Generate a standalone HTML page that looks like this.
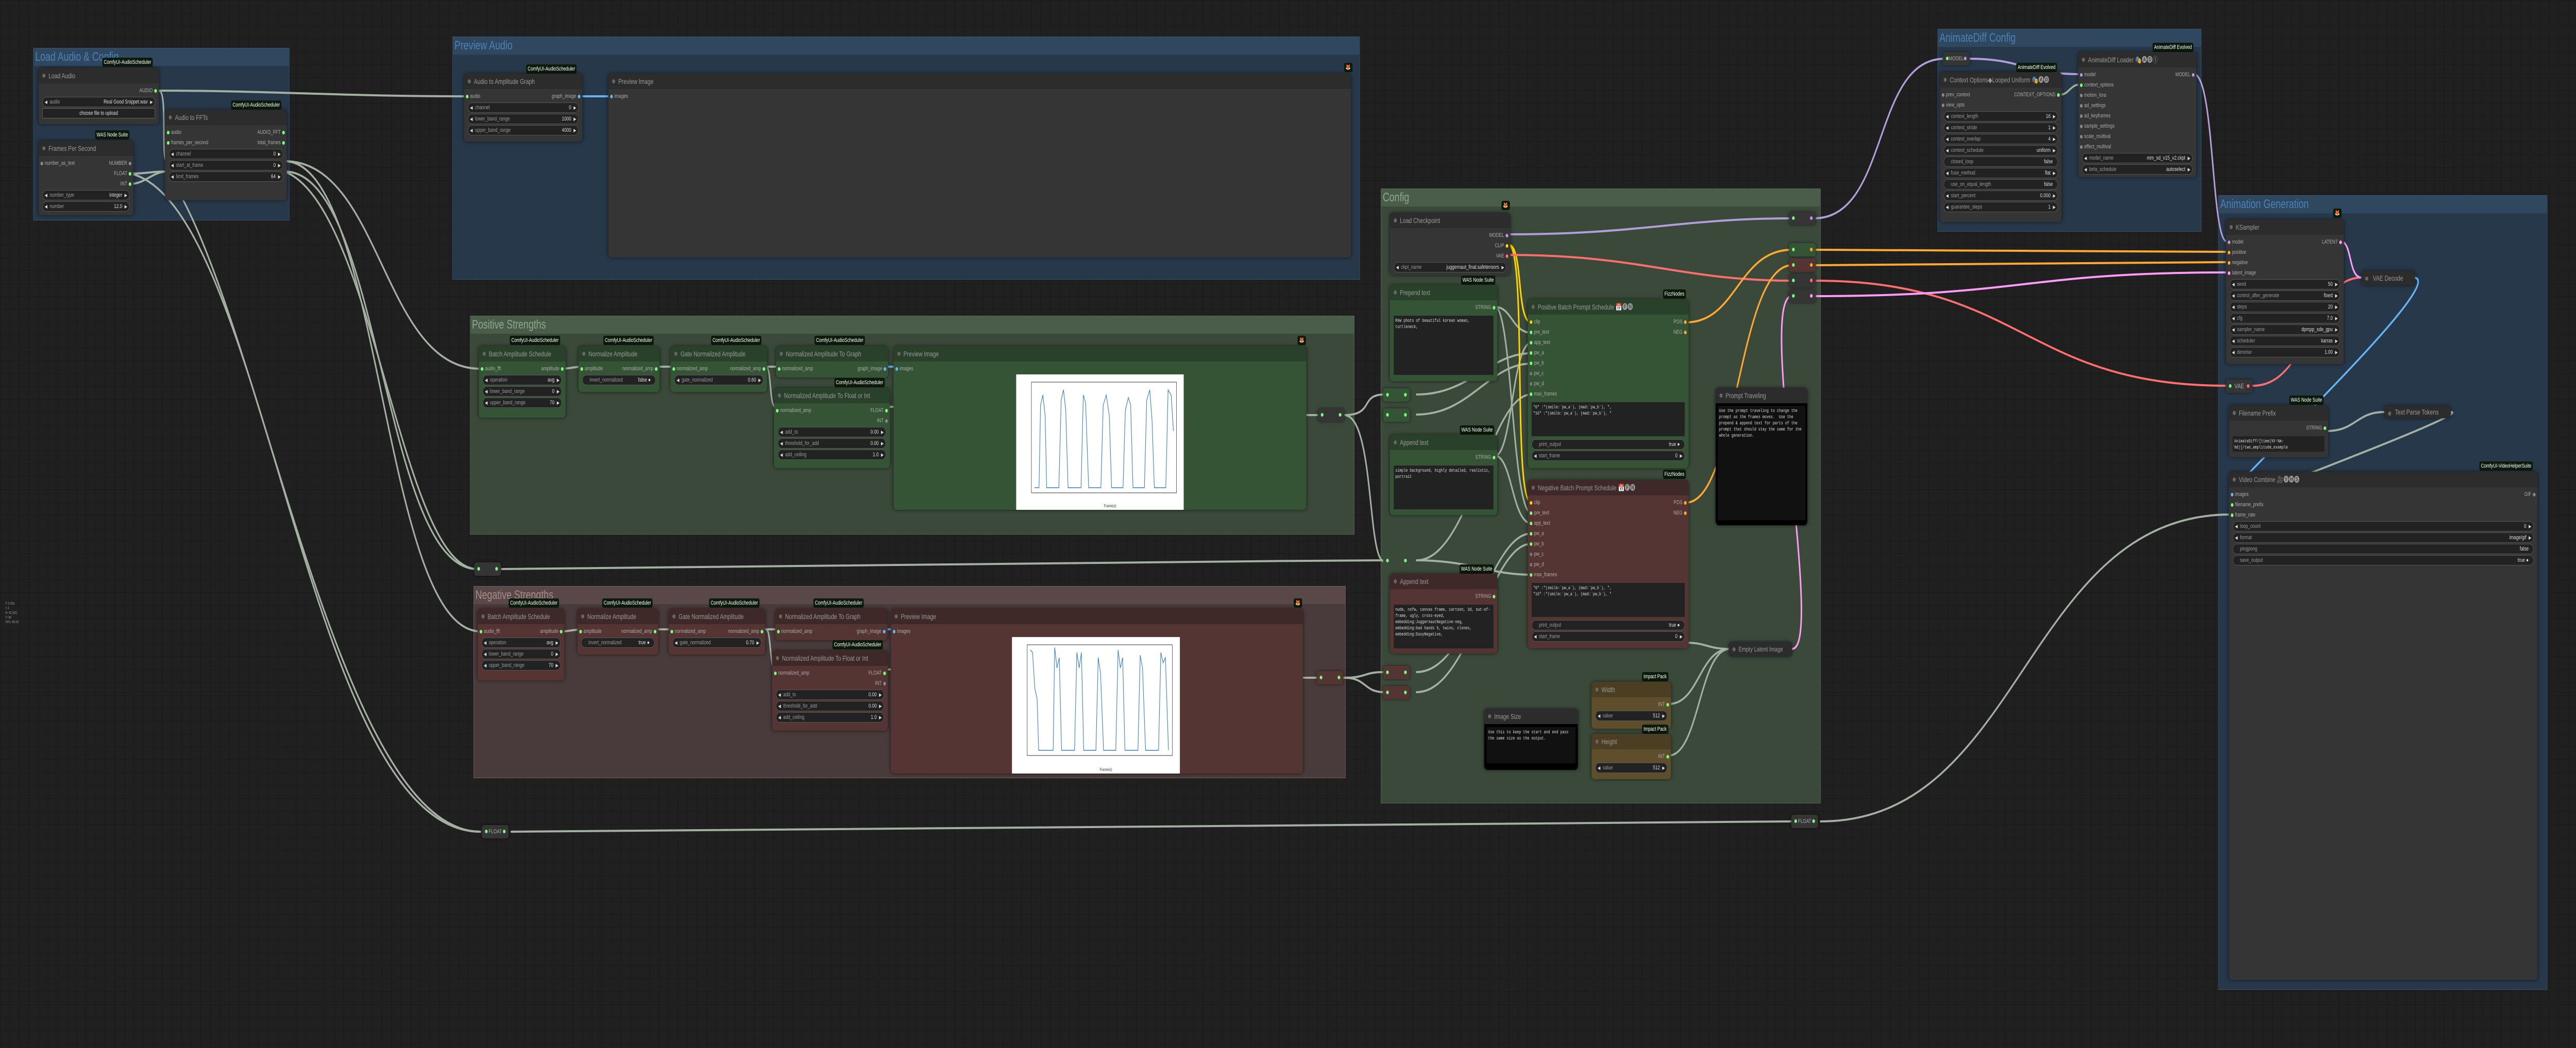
<!DOCTYPE html>
<html><head><meta charset="utf-8"><style>
*{box-sizing:border-box}
html,body{margin:0;padding:0;overflow:hidden;background:#202020}
body{width:100vw;height:100vh;position:relative}
#root{position:absolute;left:0;top:0;width:6746px;height:2035px;overflow:hidden;transform-origin:0 0;background:#202020;background-image:linear-gradient(#1a1a1a 1px,transparent 1px),linear-gradient(90deg,#1a1a1a 1px,transparent 1px);background-size:25px 25px;font-family:"Liberation Sans Narrow","Liberation Sans",sans-serif}
.g{position:absolute;border:1px solid}
.g .h{height:34px;line-height:34px;font-size:24px;padding-left:4px}
.gb{background:#27384a;border-color:#34536f}.gb .h{background:#2f4860;color:#4a82b8}
.gg{background:#3b493b;border-color:#556a55}.gg .h{background:#4a5c4a;color:#8da88d}
.gr{background:#493b3b;border-color:#7a5f5f}.gr .h{background:#5a4848;color:#a88c8c}
.n{position:absolute;background:#353535;border-radius:8px;box-shadow:0 0 8px rgba(0,0,0,.6);color:#aaa;font-size:11px}
.n .t{height:30px;line-height:30px;background:#2c2c2c;border-radius:8px 8px 0 0;padding-left:26px;font-size:14px;color:#999;position:relative;white-space:nowrap;overflow:hidden}
.n .t:before{content:"";position:absolute;left:10px;top:11px;width:8px;height:8px;border-radius:50%;background:#666}
.gn{background:#355435}.gn .t{background:#29402a}
.rn{background:#553434}.rn .t{background:#3e2828}
.bn{background:#000}.bn .t{background:#2c2c2c}
.yn{background:#5e4e2c}.yn .t{background:#4b3e22}
.c{padding-top:4px}
.r{height:20px;line-height:20px;position:relative;padding:0 16px;white-space:nowrap}
.r .o{position:absolute;right:16px}
.d{position:absolute;width:7px;height:7px;border-radius:50%;top:7px;background:#7f7}
.dl{left:5px}.dr{right:5px}
.w{margin:2px 10px;height:20px;line-height:18px;background:#222;border:1px solid #555;border-radius:10px;padding:0 18px;position:relative;color:#999;white-space:nowrap;overflow:hidden}
.w:before{content:"◀";position:absolute;left:5px;font-size:9px;color:#ddd}
.w:after{content:"▶";position:absolute;right:5px;font-size:9px;color:#ddd}
.w b{position:absolute;right:18px;font-weight:normal;color:#ddd}
.w.tg:before,.w.tg:after{content:""}
.w.tg b{right:12px}
.ta{margin:6px 10px;background:#222;color:#ddd;font-family:"Liberation Mono",monospace;font-size:9px;line-height:12px;padding:4px;white-space:pre-wrap}
.bd{position:absolute;background:#0c1a0c;color:#fff;font-size:11px;height:18px;line-height:18px;padding:0 4px;border-radius:4px;white-space:nowrap}
.rr{position:absolute;width:70px;height:26px;background:#353535;border-radius:6px;box-shadow:0 0 6px rgba(0,0,0,.6)}
.rr i{position:absolute;top:9px;width:7px;height:7px;border-radius:50%;background:#7f7}
.rr i.a{left:8px}.rr i.b{right:8px}
svg{position:absolute;left:0;top:0}
</style></head><body><div id="root">

<!-- groups -->
<div class="g gb" style="left:87px;top:93px;width:671px;height:335px"><div class="h">Load Audio &amp; Config</div></div>
<div class="g gb" style="left:1185px;top:71px;width:2376px;height:472px"><div class="h">Preview Audio</div></div>
<div class="g gg" style="left:1231px;top:613px;width:2316px;height:425px"><div class="h">Positive Strengths</div></div>
<div class="g gr" style="left:1240px;top:1138px;width:2284px;height:373px"><div class="h">Negative Strengths</div></div>
<div class="g gg" style="left:3616px;top:366px;width:1152px;height:1194px"><div class="h">Config</div></div>
<div class="g gb" style="left:5074px;top:56px;width:691px;height:394px"><div class="h">AnimateDiff Config</div></div>
<div class="g gb" style="left:5809px;top:379px;width:862px;height:1543px"><div class="h">Animation Generation</div></div>

<!-- wires -->
<svg width="6746" height="2035" fill="none" stroke-linecap="round">
<g stroke="#a3b0a2" stroke-width="4">
<path d="M416 176 C700 176 900 187 1218 187"/>
<path d="M416 176 C440 176 420 313 437 313"/>
<path d="M342 337 C390 337 390 333 437 333"/>
<path d="M342 357 C380 357 400 333 437 333"/>
<path d="M342 337 C700 400 800 1615 1258 1615"/>
<path d="M480 389 C700 700 900 1615 1258 1615"/>
<path d="M745 313 C1000 313 1000 716 1258 716"/>
<path d="M745 313 C1000 313 1000 1226 1258 1226"/>
<path d="M745 333 C1000 333 1000 1105 1250 1105"/>
<path d="M745 333 C980 400 1050 1105 1250 1105"/>
<path d="M1313 1105 C2500 1100 3000 1090 3620 1088"/>
<path d="M1339 1615 C3000 1610 4000 1600 4691 1595"/>
<path d="M4768 1595 C5300 1595 5300 999 5843 999"/>
<path d="M1478 716 L1518 712"/><path d="M1724 712 L1759 712"/><path d="M2006 712 L2035 712"/>
<path d="M2006 712 C2020 712 2015 790 2030 790"/>
<path d="M2327 790 C2900 790 2900 806 3451 806"/>
<path d="M3520 806 C3600 806 3560 766 3625 766"/>
<path d="M3520 806 C3600 806 3580 1090 3625 1090"/>
<path d="M1478 1226 L1518 1222"/><path d="M1724 1222 L1759 1222"/><path d="M2006 1222 L2035 1222"/>
<path d="M2006 1222 C2020 1222 2015 1300 2030 1300"/>
<path d="M2327 1300 C2900 1300 2900 1316 3451 1316"/>
<path d="M3520 1316 C3580 1316 3570 1305 3625 1305"/>
<path d="M3520 1316 C3580 1316 3570 1344 3625 1344"/>
<path d="M3710 766 C3850 766 3900 686 4010 686"/>
<path d="M3710 805 C3850 805 3900 706 4010 706"/>
<path d="M3915 596 C3960 596 3960 646 4010 646"/>
<path d="M3915 596 C3960 596 3960 996 4010 996"/>
<path d="M3915 885 C3960 885 3960 666 4010 666"/>
<path d="M3915 885 C3960 885 3960 1016 4010 1016"/>
<path d="M3710 1088 C3850 1088 3900 766 4010 766"/>
<path d="M3710 1088 C3850 1088 3900 1116 4010 1116"/>
<path d="M3710 1305 C3850 1305 3900 1036 4010 1036"/>
<path d="M3710 1344 C3850 1344 3900 1056 4010 1056"/>
<path d="M4370 1367 C4450 1367 4450 1260 4530 1260"/>
<path d="M4370 1467 C4450 1467 4450 1260 4530 1260"/>
<path d="M4415 1248 C4470 1248 4470 1260 4530 1260"/>
<path d="M5393 184 C5420 184 5420 164 5448 164"/>
<path d="M6092 837 C6170 837 6170 800 6244 800"/>
<path d="M6418 800 C6480 800 5900 960 5843 979"/>
</g>
<g stroke-width="4">
<path stroke="#64b5f6" d="M1512 187 L1600 187"/>
<path stroke="#64b5f6" d="M2320 712 L2343 712"/>
<path stroke="#64b5f6" d="M2320 1222 L2343 1222"/>
<path stroke="#64b5f6" d="M6320 539 C6420 539 5900 900 5843 958"/>
<path stroke="#b39ddb" d="M3950 455 C4300 455 4400 424 4693 424"/>
<path stroke="#b39ddb" d="M4750 424 C4950 424 4900 114 5093 114"/>
<path stroke="#b39ddb" d="M5155 114 C5300 114 5300 144 5448 144"/>
<path stroke="#b39ddb" d="M5745 144 C5800 144 5790 469 5832 469"/>
<path stroke="#ffd500" d="M3950 475 C3990 475 3970 626 4010 626"/>
<path stroke="#ffd500" d="M3950 475 C4000 475 3960 976 4010 976"/>
<path stroke="#ff6e6e" d="M3950 495 C4300 495 4400 545 4693 545"/>
<path stroke="#ff6e6e" d="M4750 545 C5300 545 5300 749 5832 749"/>
<path stroke="#ff6e6e" d="M5900 749 C6050 749 6050 539 6184 539"/>
<path stroke="#ffa931" d="M4415 626 C4550 626 4550 485 4693 485"/>
<path stroke="#ffa931" d="M4415 976 C4550 976 4550 515 4693 515"/>
<path stroke="#ffa931" d="M4750 485 C5300 485 5300 489 5832 489"/>
<path stroke="#ffa931" d="M4750 515 C5300 515 5300 509 5832 509"/>
<path stroke="#ff9cf9" d="M4693 1260 C4780 1260 4600 575 4693 575"/>
<path stroke="#ff9cf9" d="M4750 575 C5300 575 5300 529 5832 529"/>
<path stroke="#ff9cf9" d="M6130 469 C6160 469 6150 539 6184 539"/>
</g>
</svg>

<!-- Load Audio & Config -->
<div class="bd" style="left:268px;top:112px">ComfyUI-AudioScheduler</div>
<div class="n" style="left:101px;top:132px;width:315px;height:109px"><div class="t">Load Audio</div><div class="c">
<div class="r"><span class="o">AUDIO</span><i class="d dr"></i></div>
<div class="w">audio<b>Real Good Snippet.wav</b></div>
<div class="w tg" style="border-radius:0;text-align:center;color:#ddd;border-color:#666">choose file to upload</div></div></div>
<div class="bd" style="left:249px;top:253px">WAS Node Suite</div>
<div class="n" style="left:101px;top:273px;width:248px;height:145px"><div class="t">Frames Per Second</div><div class="c">
<div class="r"><i class="d dl" style="background:#889"></i>number_as_text<span class="o">NUMBER</span><i class="d dr" style="background:#889"></i></div>
<div class="r"><span class="o">FLOAT</span><i class="d dr"></i></div>
<div class="r"><span class="o">INT</span><i class="d dr"></i></div>
<div class="w">number_type<b>integer</b></div><div class="w">number<b>12.0</b></div></div></div>
<div class="bd" style="left:605px;top:195px">ComfyUI-AudioScheduler</div>
<div class="n" style="left:432px;top:213px;width:319px;height:176px"><div class="t">Audio to FFTs</div><div class="c">
<div class="r"><i class="d dl"></i>audio<span class="o">AUDIO_FFT</span><i class="d dr"></i></div>
<div class="r"><i class="d dl"></i>frames_per_second<span class="o">total_frames</span><i class="d dr"></i></div>
<div class="w">channel<b>0</b></div><div class="w">start_at_frame<b>0</b></div><div class="w">limit_frames<b>64</b></div></div></div>

<!-- Preview Audio -->
<div class="bd" style="left:1378px;top:125px">ComfyUI-AudioScheduler</div>
<div class="n" style="left:1215px;top:143px;width:310px;height:132px"><div class="t">Audio to Amplitude Graph</div><div class="c">
<div class="r"><i class="d dl"></i>audio<span class="o">graph_image</span><i class="d dr" style="background:#64b5f6"></i></div>
<div class="w">channel<b>0</b></div><div class="w">lower_band_range<b>1000</b></div><div class="w">upper_band_range<b>4000</b></div></div></div>
<div class="bd" style="left:3520px;top:122px">🦊</div>
<div class="n" style="left:1593px;top:143px;width:1945px;height:357px"><div class="t">Preview Image</div><div class="c">
<div class="r"><i class="d dl" style="background:#64b5f6"></i>images</div></div></div>

<!-- Positive -->
<div class="bd" style="left:1335px;top:652px">ComfyUI-AudioScheduler</div>
<div class="n gn" style="left:1254px;top:672px;width:227px;height:139px"><div class="t">Batch Amplitude Schedule</div><div class="c">
<div class="r"><i class="d dl"></i>audio_fft<span class="o">amplitude</span><i class="d dr"></i></div>
<div class="w">operation<b>avg</b></div><div class="w">lower_band_range<b>0</b></div><div class="w">upper_band_range<b>70</b></div></div></div>
<div class="bd" style="left:1580px;top:652px">ComfyUI-AudioScheduler</div>
<div class="n gn" style="left:1515px;top:672px;width:212px;height:89px"><div class="t">Normalize Amplitude</div><div class="c">
<div class="r"><i class="d dl"></i>amplitude<span class="o">normalized_amp</span><i class="d dr"></i></div>
<div class="w tg">invert_normalized<b>false ●</b></div></div></div>
<div class="bd" style="left:1862px;top:652px">ComfyUI-AudioScheduler</div>
<div class="n gn" style="left:1756px;top:672px;width:253px;height:89px"><div class="t">Gate Normalized Amplitude</div><div class="c">
<div class="r"><i class="d dl"></i>normalized_amp<span class="o">normalized_amp</span><i class="d dr"></i></div>
<div class="w">gate_normalized<b>0.60</b></div></div></div>
<div class="bd" style="left:2133px;top:652px">ComfyUI-AudioScheduler</div>
<div class="n gn" style="left:2032px;top:672px;width:294px;height:61px"><div class="t">Normalized Amplitude To Graph</div><div class="c">
<div class="r"><i class="d dl"></i>normalized_amp<span class="o">graph_image</span><i class="d dr" style="background:#64b5f6"></i></div></div></div>
<div class="bd" style="left:2185px;top:734px">ComfyUI-AudioScheduler</div>
<div class="n gn" style="left:2027px;top:753px;width:303px;height:156px"><div class="t">Normalized Amplitude To Float or Int</div><div class="c">
<div class="r"><i class="d dl"></i>normalized_amp<span class="o">FLOAT</span><i class="d dr"></i></div>
<div class="r"><span class="o">INT</span><i class="d dr" style="background:#889"></i></div>
<div class="w">add_to<b>0.00</b></div><div class="w">threshold_for_add<b>0.00</b></div><div class="w">add_ceiling<b>1.0</b></div></div></div>
<div class="bd" style="left:3398px;top:652px">🦊</div>
<div class="n gn" style="left:2340px;top:672px;width:1081px;height:318px"><div class="t">Preview Image</div><div class="c">
<div class="r"><i class="d dl" style="background:#64b5f6"></i>images</div></div></div>
<svg style="left:2661px;top:727px" width="439" height="263" fill="none"><rect width="439" height="263" fill="#fff"/><rect x="40" y="15" width="380" height="215" fill="none" stroke="#333" stroke-width="1"/>
<polyline fill="none" stroke="#3a7fc0" stroke-width="1.5" points="48,220 60,220 64,60 70,40 76,80 80,220 112,220 118,50 124,30 130,70 136,220 170,220 176,40 182,55 190,220 222,220 228,60 236,40 244,80 250,220 280,220 286,70 294,45 300,60 306,220 336,220 342,50 350,30 356,90 362,220 392,220 398,30 406,40 412,110"/>
<text x="230" y="258" font-size="8" fill="#333" font-family="Liberation Sans">Frame(s)</text></svg>
<div class="rr" style="left:3451px;top:793px"><i class="a"></i><i class="b"></i></div>

<!-- Negative -->
<div class="bd" style="left:1332px;top:1162px">ComfyUI-AudioScheduler</div>
<div class="n rn" style="left:1251px;top:1182px;width:227px;height:139px"><div class="t">Batch Amplitude Schedule</div><div class="c">
<div class="r"><i class="d dl"></i>audio_fft<span class="o">amplitude</span><i class="d dr"></i></div>
<div class="w">operation<b>avg</b></div><div class="w">lower_band_range<b>0</b></div><div class="w">upper_band_range<b>70</b></div></div></div>
<div class="bd" style="left:1577px;top:1162px">ComfyUI-AudioScheduler</div>
<div class="n rn" style="left:1512px;top:1182px;width:212px;height:89px"><div class="t">Normalize Amplitude</div><div class="c">
<div class="r"><i class="d dl"></i>amplitude<span class="o">normalized_amp</span><i class="d dr"></i></div>
<div class="w tg">invert_normalized<b>true ●</b></div></div></div>
<div class="bd" style="left:1857px;top:1162px">ComfyUI-AudioScheduler</div>
<div class="n rn" style="left:1751px;top:1182px;width:253px;height:89px"><div class="t">Gate Normalized Amplitude</div><div class="c">
<div class="r"><i class="d dl"></i>normalized_amp<span class="o">normalized_amp</span><i class="d dr"></i></div>
<div class="w">gate_normalized<b>0.70</b></div></div></div>
<div class="bd" style="left:2130px;top:1162px">ComfyUI-AudioScheduler</div>
<div class="n rn" style="left:2030px;top:1182px;width:294px;height:61px"><div class="t">Normalized Amplitude To Graph</div><div class="c">
<div class="r"><i class="d dl"></i>normalized_amp<span class="o">graph_image</span><i class="d dr" style="background:#64b5f6"></i></div></div></div>
<div class="bd" style="left:2180px;top:1243px">ComfyUI-AudioScheduler</div>
<div class="n rn" style="left:2022px;top:1263px;width:303px;height:156px"><div class="t">Normalized Amplitude To Float or Int</div><div class="c">
<div class="r"><i class="d dl"></i>normalized_amp<span class="o">FLOAT</span><i class="d dr"></i></div>
<div class="r"><span class="o">INT</span><i class="d dr" style="background:#889"></i></div>
<div class="w">add_to<b>0.00</b></div><div class="w">threshold_for_add<b>0.00</b></div><div class="w">add_ceiling<b>1.0</b></div></div></div>
<div class="bd" style="left:3388px;top:1162px">🦊</div>
<div class="n rn" style="left:2333px;top:1182px;width:1079px;height:320px"><div class="t">Preview Image</div><div class="c">
<div class="r"><i class="d dl" style="background:#64b5f6"></i>images</div></div></div>
<svg style="left:2650px;top:1237px" width="440" height="265" fill="none"><rect width="440" height="265" fill="#fff"/><rect x="40" y="15" width="380" height="215" fill="none" stroke="#333" stroke-width="1"/>
<polyline fill="none" stroke="#3a7fc0" stroke-width="1.5" points="48,25 54,30 60,100 66,120 70,220 108,220 112,20 118,60 124,40 130,220 164,220 170,30 176,60 182,30 188,220 220,220 226,40 232,70 240,220 272,220 278,25 284,60 290,40 296,220 330,220 336,35 342,60 350,220 384,220 390,30 396,50 402,40 410,220"/>
<text x="230" y="260" font-size="8" fill="#333" font-family="Liberation Sans">Frame(s)</text></svg>
<div class="rr" style="left:3448px;top:1303px;background:#553434"><i class="a"></i><i class="b"></i></div>

<!-- left reroutes -->
<div class="rr" style="left:1242px;top:1092px"><i class="a"></i><i class="b"></i></div>
<div class="rr" style="left:1262px;top:1602px;font-size:11px;color:#aaa;line-height:26px;text-align:center">FLOAT<i class="a"></i><i class="b"></i></div>

<!-- Config -->
<div class="bd" style="left:3932px;top:390px">🦊</div>
<div class="n" style="left:3640px;top:413px;width:315px;height:122px"><div class="t">Load Checkpoint</div><div class="c">
<div class="r"><span class="o">MODEL</span><i class="d dr" style="background:#b39ddb"></i></div>
<div class="r"><span class="o">CLIP</span><i class="d dr" style="background:#ffd500"></i></div>
<div class="r"><span class="o">VAE</span><i class="d dr" style="background:#ff6e6e"></i></div>
<div class="w">ckpt_name<b>juggernaut_final.safetensors</b></div></div></div>
<div class="bd" style="left:3826px;top:535px">WAS Node Suite</div>
<div class="n gn" style="left:3640px;top:553px;width:281px;height:187px"><div class="t">Prepend text</div><div class="c">
<div class="r"><span class="o">STRING</span><i class="d dr"></i></div>
<div class="ta" style="height:115px">RAW photo of beautiful korean woman, turtleneck,</div></div></div>
<div class="bd" style="left:3823px;top:826px">WAS Node Suite</div>
<div class="n gn" style="left:3640px;top:844px;width:281px;height:156px"><div class="t">Append text</div><div class="c">
<div class="r"><span class="o">STRING</span><i class="d dr"></i></div>
<div class="ta" style="height:85px">simple background, highly detailed, realistic, portrait</div></div></div>
<div class="bd" style="left:3822px;top:1096px">WAS Node Suite</div>
<div class="n rn" style="left:3640px;top:1114px;width:281px;height:155px"><div class="t">Append text</div><div class="c">
<div class="r"><span class="o">STRING</span><i class="d dr"></i></div>
<div class="ta" style="height:85px">nude, nsfw, canvas frame, cartoon, 3d, out-of-frame, ugly, cross-eyed, embedding:JuggernautNegative-neg, embedding:bad hands 5, twins, clones, embedding:EasyNegative,</div></div></div>
<div class="rr" style="left:3622px;top:754px;background:#355435"><i class="a"></i><i class="b"></i></div>
<div class="rr" style="left:3622px;top:793px;background:#355435"><i class="a"></i><i class="b"></i></div>
<div class="rr" style="left:3622px;top:1076px;background:#3b493b;box-shadow:none"><i class="a"></i><i class="b"></i></div>
<div class="rr" style="left:3622px;top:1293px;background:#553434"><i class="a"></i><i class="b"></i></div>
<div class="rr" style="left:3622px;top:1332px;background:#553434"><i class="a"></i><i class="b"></i></div>

<div class="bd" style="left:4355px;top:562px">FizzNodes</div>
<div class="n gn" style="left:4001px;top:581px;width:421px;height:328px"><div class="t">Positive Batch Prompt Schedule 📅🅕🅝</div><div class="c">
<div class="r"><i class="d dl" style="background:#ffd500"></i>clip<span class="o">POS</span><i class="d dr" style="background:#ffa931"></i></div>
<div class="r"><i class="d dl"></i>pre_text<span class="o">NEG</span><i class="d dr" style="background:#ffa931"></i></div>
<div class="r"><i class="d dl"></i>app_text</div><div class="r"><i class="d dl"></i>pw_a</div><div class="r"><i class="d dl"></i>pw_b</div>
<div class="r"><i class="d dl" style="background:#777"></i>pw_c</div><div class="r"><i class="d dl" style="background:#777"></i>pw_d</div><div class="r"><i class="d dl"></i>max_frames</div>
<div class="ta" style="height:66px">"0" :"(smile:`pw_a`), (mad:`pw_b`), ",
"16" :"(smile:`pw_a`), (mad:`pw_b`), "</div>
<div class="w tg">print_output<b>true ●</b></div><div class="w">start_frame<b>0</b></div></div></div>
<div class="bd" style="left:4355px;top:912px">FizzNodes</div>
<div class="n rn" style="left:4001px;top:932px;width:421px;height:327px"><div class="t">Negative Batch Prompt Schedule 📅🅕🅝</div><div class="c">
<div class="r"><i class="d dl" style="background:#ffd500"></i>clip<span class="o">POS</span><i class="d dr" style="background:#ffa931"></i></div>
<div class="r"><i class="d dl"></i>pre_text<span class="o">NEG</span><i class="d dr" style="background:#ffa931"></i></div>
<div class="r"><i class="d dl"></i>app_text</div><div class="r"><i class="d dl"></i>pw_a</div><div class="r"><i class="d dl"></i>pw_b</div>
<div class="r"><i class="d dl" style="background:#777"></i>pw_c</div><div class="r"><i class="d dl" style="background:#777"></i>pw_d</div><div class="r"><i class="d dl"></i>max_frames</div>
<div class="ta" style="height:66px">"0" :"(smile:`pw_a`), (mad:`pw_b`), ",
"16" :"(smile:`pw_a`), (mad:`pw_b`), "</div>
<div class="w tg">print_output<b>true ●</b></div><div class="w">start_frame<b>0</b></div></div></div>
<div class="n bn" style="left:4493px;top:753px;width:240px;height:267px"><div class="t">Prompt Traveling</div>
<div class="ta" style="background:#111;height:222px;margin:5px">Use the prompt traveling to change the prompt as the frames moves.  Use the prepend &amp; append text for parts of the prompt that should stay the same for the whole generation.</div></div>
<div class="n" style="left:4527px;top:1246px;width:166px;height:29px"><div class="t" style="border-radius:8px;height:29px;line-height:29px;font-size:13px">Empty Latent Image</div></div>
<div class="bd" style="left:4300px;top:1305px">Impact Pack</div>
<div class="n yn" style="left:4168px;top:1324px;width:208px;height:91px"><div class="t">Width</div><div class="c">
<div class="r"><span class="o">INT</span><i class="d dr"></i></div><div class="w">value<b>512</b></div></div></div>
<div class="bd" style="left:4300px;top:1407px">Impact Pack</div>
<div class="n yn" style="left:4168px;top:1425px;width:208px;height:88px"><div class="t">Height</div><div class="c">
<div class="r"><span class="o">INT</span><i class="d dr"></i></div><div class="w">value<b>512</b></div></div></div>
<div class="n bn" style="left:3887px;top:1376px;width:245px;height:119px"><div class="t">Image Size</div>
<div class="ta" style="background:#111;height:70px;margin:6px">Use this to keep the start and end pass the same size as the output.</div></div>
<div class="rr" style="left:4685px;top:411px"><i class="a"></i><i class="b" style="background:#b39ddb"></i></div>
<div class="rr" style="left:4685px;top:472px;background:#355435"><i class="a"></i><i class="b" style="background:#ffa931"></i></div>
<div class="rr" style="left:4685px;top:502px;background:#553434"><i class="a"></i><i class="b" style="background:#ffa931"></i></div>
<div class="rr" style="left:4685px;top:532px"><i class="a"></i><i class="b" style="background:#ff6e6e"></i></div>
<div class="rr" style="left:4685px;top:562px"><i class="a"></i><i class="b" style="background:#ff9cf9"></i></div>
<div class="rr" style="left:4691px;top:1582px;font-size:11px;color:#aaa;line-height:26px;text-align:center">FLOAT<i class="a"></i><i class="b"></i></div>

<!-- AnimateDiff -->
<div class="rr" style="left:5088px;top:101px;font-size:11px;color:#aaa;line-height:26px;text-align:center">MODEL<i class="a"></i><i class="b" style="background:#b39ddb"></i></div>
<div class="bd" style="left:5280px;top:122px">AnimateDiff Evolved</div>
<div class="n" style="left:5080px;top:140px;width:319px;height:291px"><div class="t">Context Options◆Looped Uniform 🎭🅐🅓</div><div class="c">
<div class="r"><i class="d dl" style="background:#888"></i>prev_context<span class="o">CONTEXT_OPTIONS</span><i class="d dr"></i></div>
<div class="r"><i class="d dl" style="background:#888"></i>view_opts</div>
<div class="w">context_length<b>16</b></div><div class="w">context_stride<b>1</b></div><div class="w">context_overlap<b>4</b></div><div class="w">context_schedule<b>uniform</b></div>
<div class="w tg">closed_loop<b>false</b></div><div class="w">fuse_method<b>flat</b></div><div class="w tg">use_on_equal_length<b>false</b></div><div class="w">start_percent<b>0.000</b></div><div class="w">guarantee_steps<b>1</b></div></div></div>
<div class="bd" style="left:5637px;top:83px">AnimateDiff Evolved</div>
<div class="n" style="left:5442px;top:101px;width:310px;height:243px"><div class="t">AnimateDiff Loader 🎭🅐🅓①</div><div class="c">
<div class="r"><i class="d dl" style="background:#b39ddb"></i>model<span class="o">MODEL</span><i class="d dr" style="background:#b39ddb"></i></div>
<div class="r"><i class="d dl"></i>context_options</div><div class="r"><i class="d dl" style="background:#888"></i>motion_lora</div><div class="r"><i class="d dl" style="background:#888"></i>ad_settings</div>
<div class="r"><i class="d dl" style="background:#888"></i>ad_keyframes</div><div class="r"><i class="d dl" style="background:#888"></i>sample_settings</div><div class="r"><i class="d dl" style="background:#888"></i>scale_multival</div><div class="r"><i class="d dl" style="background:#888"></i>effect_multival</div>
<div class="w">model_name<b>mm_sd_v15_v2.ckpt</b></div><div class="w">beta_schedule<b>autoselect</b></div></div></div>

<!-- Animation Generation -->
<div class="bd" style="left:6110px;top:405px">🦊</div>
<div class="n" style="left:5829px;top:426px;width:309px;height:281px"><div class="t">KSampler</div><div class="c">
<div class="r"><i class="d dl" style="background:#b39ddb"></i>model<span class="o">LATENT</span><i class="d dr" style="background:#ff9cf9"></i></div>
<div class="r"><i class="d dl" style="background:#ffa931"></i>positive</div><div class="r"><i class="d dl" style="background:#ffa931"></i>negative</div><div class="r"><i class="d dl" style="background:#ff9cf9"></i>latent_image</div>
<div class="w">seed<b>50</b></div><div class="w">control_after_generate<b>fixed</b></div><div class="w">steps<b>20</b></div><div class="w">cfg<b>7.0</b></div><div class="w">sampler_name<b>dpmpp_sde_gpu</b></div><div class="w">scheduler<b>karras</b></div><div class="w">denoise<b>1.00</b></div></div></div>
<div class="n" style="left:6184px;top:526px;width:140px;height:28px"><div class="t" style="border-radius:8px;height:28px;line-height:28px;padding-left:30px">VAE Decode</div></div>
<div class="rr" style="left:5829px;top:737px;font-size:13px;color:#aaa;line-height:26px;text-align:center">VAE<i class="a"></i><i class="b" style="background:#ff6e6e"></i></div>
<div class="bd" style="left:5995px;top:768px">WAS Node Suite</div>
<div class="n" style="left:5837px;top:787px;width:260px;height:101px"><div class="t">Filename Prefix</div><div class="c">
<div class="r"><span class="o">STRING</span><i class="d dr"></i></div>
<div class="ta" style="height:30px">AnimateDiff/[time(%Y-%m-%d)]/two_amplitude_example</div></div></div>
<div class="n" style="left:6244px;top:788px;width:174px;height:24px"><div class="t" style="border-radius:8px;height:24px;line-height:24px;padding-left:28px">Text Parse Tokens</div></div>
<div class="bd" style="left:6493px;top:896px">ComfyUI-VideoHelperSuite</div>
<div class="n" style="left:5837px;top:916px;width:808px;height:987px"><div class="t">Video Combine 🎥🅥🅗🅢</div><div class="c">
<div class="r"><i class="d dl" style="background:#64b5f6"></i>images<span class="o">GIF</span><i class="d dr" style="background:#888"></i></div>
<div class="r"><i class="d dl"></i>filename_prefix</div><div class="r"><i class="d dl"></i>frame_rate</div>
<div class="w">loop_count<b>0</b></div><div class="w">format<b>image/gif</b></div><div class="w tg">pingpong<b>false</b></div><div class="w tg">save_output<b>true ●</b></div></div></div>

<div style="position:absolute;left:14px;top:1168px;color:#999;font-size:7px;line-height:9px;font-family:'Liberation Sans',sans-serif">T: 0.00s<br>I: 0<br>N: 42 [42]<br>V: 80<br>FPS: 60.00</div>
</div>
<script>
(function(){var r=document.getElementById('root');function f(){var sx=window.innerWidth/6746,sy=window.innerHeight/2035;if(Math.abs(sx-1)<0.001&&Math.abs(sy-1)<0.001){r.style.transform='none';}else{r.style.transform='scale('+sx+','+sy+')';}}f();window.addEventListener('resize',f);})();
</script>
</body></html>
